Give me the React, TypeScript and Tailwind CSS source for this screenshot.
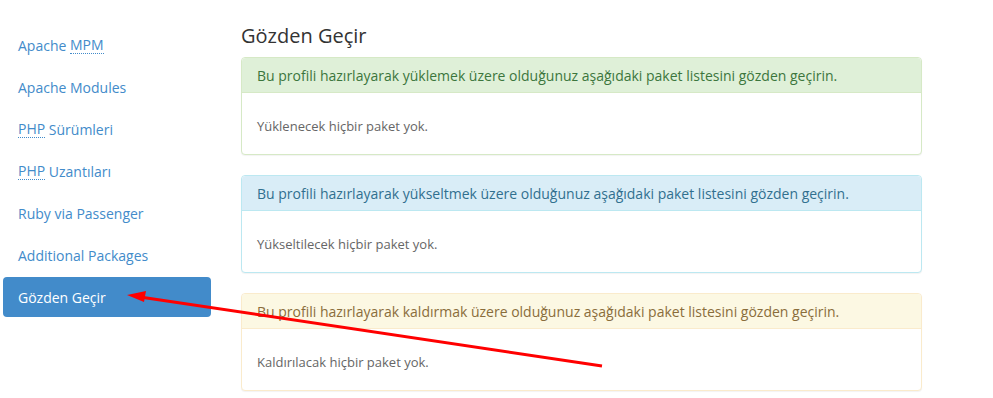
import React from 'react';

const navItems = [
  { label: 'Apache ', abbr: 'MPM', abbrFirst: false },
  { label: 'Apache Modules' },
  { label: ' Sürümleri', abbr: 'PHP', abbrFirst: true },
  { label: ' Uzantıları', abbr: 'PHP', abbrFirst: true },
  { label: 'Ruby via Passenger' },
  { label: 'Additional Packages' },
];

const panels = [
  {
    head: 'Bu profili hazırlayarak yüklemek üzere olduğunuz aşağıdaki paket listesini gözden geçirin.',
    body: 'Yüklenecek hiçbir paket yok.',
    border: 'border-[#d6e9c6]',
    bg: 'bg-[#dff0d8]',
    text: 'text-[#3c763d]',
  },
  {
    head: 'Bu profili hazırlayarak yükseltmek üzere olduğunuz aşağıdaki paket listesini gözden geçirin.',
    body: 'Yükseltilecek hiçbir paket yok.',
    border: 'border-[#bce8f1]',
    bg: 'bg-[#d9edf7]',
    text: 'text-[#31708f]',
  },
  {
    head: 'Bu profili hazırlayarak kaldırmak üzere olduğunuz aşağıdaki paket listesini gözden geçirin.',
    body: 'Kaldırılacak hiçbir paket yok.',
    border: 'border-[#faebcc]',
    bg: 'bg-[#fcf8e3]',
    text: 'text-[#8a6d3b]',
  },
];

function Abbr({ children }: { children: React.ReactNode }) {
  return <span className="border-b border-dotted border-[#428bca] leading-[17px]">{children}</span>;
}

export default function App() {
  return (
    <div className="relative w-[993px] h-[398px] bg-white overflow-hidden" style={{ fontFamily: '"Open Sans", "Liberation Sans", sans-serif' }}>
      <div className="flex gap-[30px]">
        <nav className="w-[208px] ml-[3px] pt-[24px] flex flex-col text-[14px] text-[#428bca]">
          {navItems.map((item, i) => (
            <div key={i} className="h-[42px] flex items-center px-[15px]">
              {item.abbr && item.abbrFirst && <Abbr>{item.abbr}</Abbr>}
              <span className="whitespace-pre">{item.label}</span>
              {item.abbr && !item.abbrFirst && <Abbr>{item.abbr}</Abbr>}
            </div>
          ))}
          <div className="h-10 mt-[1px] flex items-center px-[15px] rounded bg-[#428bca] text-white">Gözden Geçir</div>
        </nav>

        <main className="w-[681px] pt-[25px]">
          <h2 className="text-[20px] leading-[22px] text-[#333] mb-[10px]">Gözden Geçir</h2>
          <div className="flex flex-col gap-[20px]">
            {panels.map((p, i) => (
              <div key={i} className={`border ${p.border} rounded bg-white shadow-[0_1px_1px_rgba(0,0,0,0.05)]`}>
                <div className={`h-[35px] flex items-center px-[15px] border-b ${p.border} ${p.bg} ${p.text} text-[14px] rounded-t`}>
                  {p.head}
                </div>
                <div className="h-[61px] pt-[23px] px-[15px] text-[13px] leading-[20px] text-[#666]">{p.body}</div>
              </div>
            ))}
          </div>
        </main>
      </div>

      <svg className="absolute inset-0 pointer-events-none" width="993" height="398">
        <line x1="602" y1="366" x2="140" y2="297" stroke="#ff0000" strokeWidth="3" />
        <polygon points="127,295 146,291 144,302" fill="#ff0000" />
      </svg>
    </div>
  );
}
